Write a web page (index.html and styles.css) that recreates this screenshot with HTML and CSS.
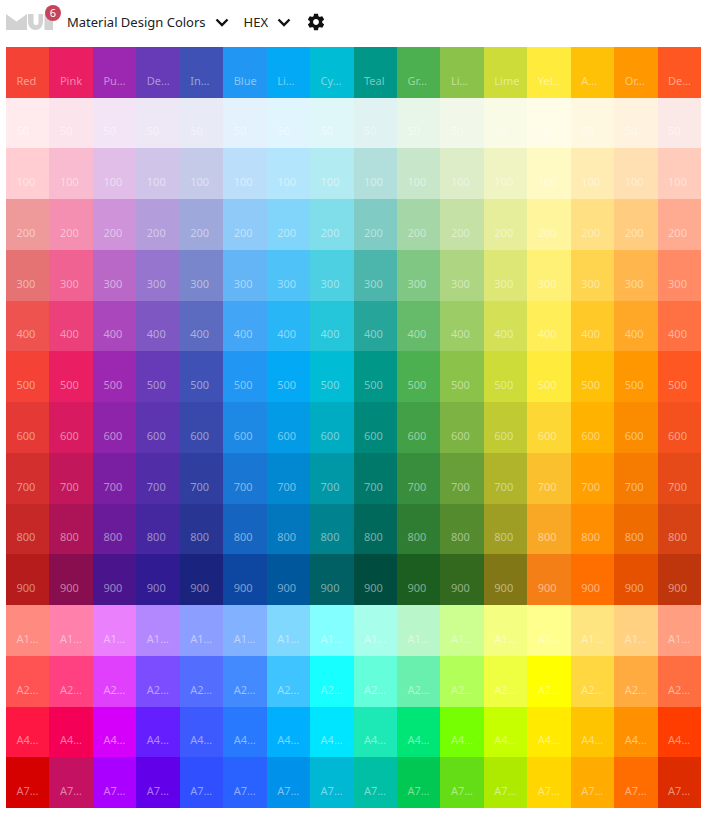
FILE: index.html
```html
<!DOCTYPE html>
<html lang="en">
<head>
<meta charset="utf-8">
<title>Material Design Colors</title>
<link rel="stylesheet" href="styles.css">
<script src="app.js" defer></script>
</head>
<body>
<header class="toolbar">
  <div class="logo">
    <svg class="logo-mark" width="47" height="16" viewBox="0 0 47 16"><path d="M0 0 L10.500 7.500 L21 0 V16 H0 Z M22 0 H27.500 V8.500 A2.500 2.500 0 0 0 32.500 8.500 V0 H37 V8 A7.500 8 0 0 1 22 8 Z M38.500 0 H47 V16 H38.500 Z"/></svg>
    <span class="badge">6</span>
  </div>
  <div class="select"><span>Material Design Colors</span>
    <svg class="chevron" width="14" height="9" viewBox="0 0 14 9"><path d="M1.500 1.500 L7 7 L12.500 1.500"/></svg>
  </div>
  <div class="select"><span>HEX</span>
    <svg class="chevron" width="14" height="9" viewBox="0 0 14 9"><path d="M1.500 1.500 L7 7 L12.500 1.500"/></svg>
  </div>
  <svg class="gear" width="20" height="20" viewBox="0 0 24 24"><path d="M19.430 12.980c.04-.32.07-.64.07-.98s-.03-.66-.07-.98l2.110-1.650c.19-.15.24-.42.12-.64l-2-3.460c-.12-.22-.39-.3-.61-.22l-2.490 1c-.52-.4-1.080-.73-1.690-.98l-.38-2.650C14.460 2.180 14.250 2 14 2h-4c-.25 0-.46.180-.49.420l-.38 2.650c-.61.250-1.170.590-1.690.980l-2.490-1c-.23-.090-.49 0-.61.220l-2 3.460c-.13.220-.07.490.12.640l2.110 1.650c-.04.320-.07.650-.07.980s.03.660.07.980l-2.110 1.650c-.19.150-.24.420-.12.640l2 3.460c.12.220.39.300.61.220l2.490-1c.52.400 1.080.730 1.690.980l.38 2.650c.03.240.24.420.49.420h4c.25 0 .46-.180.49-.420l.38-2.650c.61-.250 1.170-.590 1.690-.980l2.490 1c.23.090.49 0 .61-.220l2-3.460c.12-.22.07-.49-.12-.64l-2.110-1.650zM12 15.500c-1.930 0-3.500-1.570-3.500-3.500s1.570-3.500 3.500-3.500 3.500 1.570 3.500 3.500-1.570 3.500-3.500 3.500z"/></svg>
</header>
<main class="palette" id="palette"></main>
</body>
</html>
```
FILE: styles.css
```css
* { box-sizing: border-box; }
html, body { margin: 0; background: #fff; }
body { width: 701px; height: 814px; overflow: hidden; font-family: "Noto Sans", "Open Sans", sans-serif; color: #212121; }
.toolbar { display: flex; align-items: center; height: 47px; padding: 0 0 3px 6px; }
.logo { position: relative; width: 47px; height: 16px; margin-right: 14px; }
.logo-mark { display: block; fill: #d2d2d2; }
.badge { position: absolute; top: -9px; left: 39px; width: 16px; height: 16px; border-radius: 50%; background: #c4455a; color: #fff; font-size: 11px; line-height: 16px; text-align: center; }
.select { display: flex; align-items: center; gap: 9px; margin-right: 15px; font-size: 13px; line-height: 20px; }
.chevron { fill: none; stroke: #111; stroke-width: 2.4; }
.gear { fill: #111; }
.palette { display: grid; grid-template-columns: repeat(16, 1fr); grid-template-rows: repeat(15, 1fr); width: 695px; height: 761px; margin-left: 6px; }
.cell { display: flex; align-items: flex-end; min-width: 0; padding: 0 0 9px 10.5px; font-size: 11px; line-height: 16px; color: rgba(255, 255, 255, 0.48); }
.cell-label { white-space: nowrap; }
```
FILE: app.js
```js
const names = ["Red","Pink","Pu…","De…","In…","Blue","Li…","Cy…","Teal","Gr…","Li…","Lime","Yel…","A…","Or…","De…"];
const shades = [
["Base","f44336 e91e63 9c27b0 673ab7 3f51b5 2196f3 03a9f4 00bcd4 009688 4caf50 8bc34a cddc39 ffeb3b ffc107 ff9800 ff5722"],
["50","ffebee fce4ec f3e5f5 ede7f6 e8eaf6 e3f2fd e1f5fe e0f7fa e0f2f1 e8f5e9 f1f8e9 f9fbe7 fffde7 fff8e1 fff3e0 fbe9e7"],
["100","ffcdd2 f8bbd0 e1bee7 d1c4e9 c5cae9 bbdefb b3e5fc b2ebf2 b2dfdb c8e6c9 dcedc8 f0f4c3 fff9c4 ffecb3 ffe0b2 ffccbc"],
["200","ef9a9a f48fb1 ce93d8 b39ddb 9fa8da 90caf9 81d4fa 80deea 80cbc4 a5d6a7 c5e1a5 e6ee9c fff59d ffe082 ffcc80 ffab91"],
["300","e57373 f06292 ba68c8 9575cd 7986cb 64b5f6 4fc3f7 4dd0e1 4db6ac 81c784 aed581 dce775 fff176 ffd54f ffb74d ff8a65"],
["400","ef5350 ec407a ab47bc 7e57c2 5c6bc0 42a5f5 29b6f6 26c6da 26a69a 66bb6a 9ccc65 d4e157 ffee58 ffca28 ffa726 ff7043"],
["500","f44336 e91e63 9c27b0 673ab7 3f51b5 2196f3 03a9f4 00bcd4 009688 4caf50 8bc34a cddc39 ffeb3b ffc107 ff9800 ff5722"],
["600","e53935 d81b60 8e24aa 5e35b1 3949ab 1e88e5 039be5 00acc1 00897b 43a047 7cb342 c0ca33 fdd835 ffb300 fb8c00 f4511e"],
["700","d32f2f c2185b 7b1fa2 512da8 303f9f 1976d2 0288d1 0097a7 00796b 388e3c 689f38 afb42b fbc02d ffa000 f57c00 e64a19"],
["800","c62828 ad1457 6a1b9a 4527a0 283593 1565c0 0277bd 00838f 00695c 2e7d32 558b2f 9e9d24 f9a825 ff8f00 ef6c00 d84315"],
["900","b71c1c 880e4f 4a148c 311b92 1a237e 0d47a1 01579b 006064 004d40 1b5e20 33691e 827717 f57f17 ff6f00 e65100 bf360c"],
["A1…","ff8a80 ff80ab ea80fc b388ff 8c9eff 82b1ff 80d8ff 84ffff a7ffeb b9f6ca ccff90 f4ff81 ffff8d ffe57f ffd180 ff9e80"],
["A2…","ff5252 ff4081 e040fb 7c4dff 536dfe 448aff 40c4ff 18ffff 64ffda 69f0ae b2ff59 eeff41 ffff00 ffd740 ffab40 ff6e40"],
["A4…","ff1744 f50057 d500f9 651fff 3d5afe 2979ff 00b0ff 00e5ff 1de9b6 00e676 76ff03 c6ff00 ffea00 ffc400 ff9100 ff3d00"],
["A7…","d50000 c51162 aa00ff 6200ea 304ffe 2962ff 0091ea 00b8d4 00bfa5 00c853 64dd17 aeea00 ffd600 ffab00 ff6d00 dd2c00"]
];
const root = document.getElementById("palette");
shades.forEach(([label, colours]) => {
  colours.split(" ").forEach((hex, i) => {
    const cell = document.createElement("div");
    cell.className = "cell";
    cell.style.background = "#" + hex;
    const text = document.createElement("span");
    text.className = "cell-label";
    text.textContent = label === "Base" ? names[i] : label;
    cell.appendChild(text);
    root.appendChild(cell);
  });
});
```
